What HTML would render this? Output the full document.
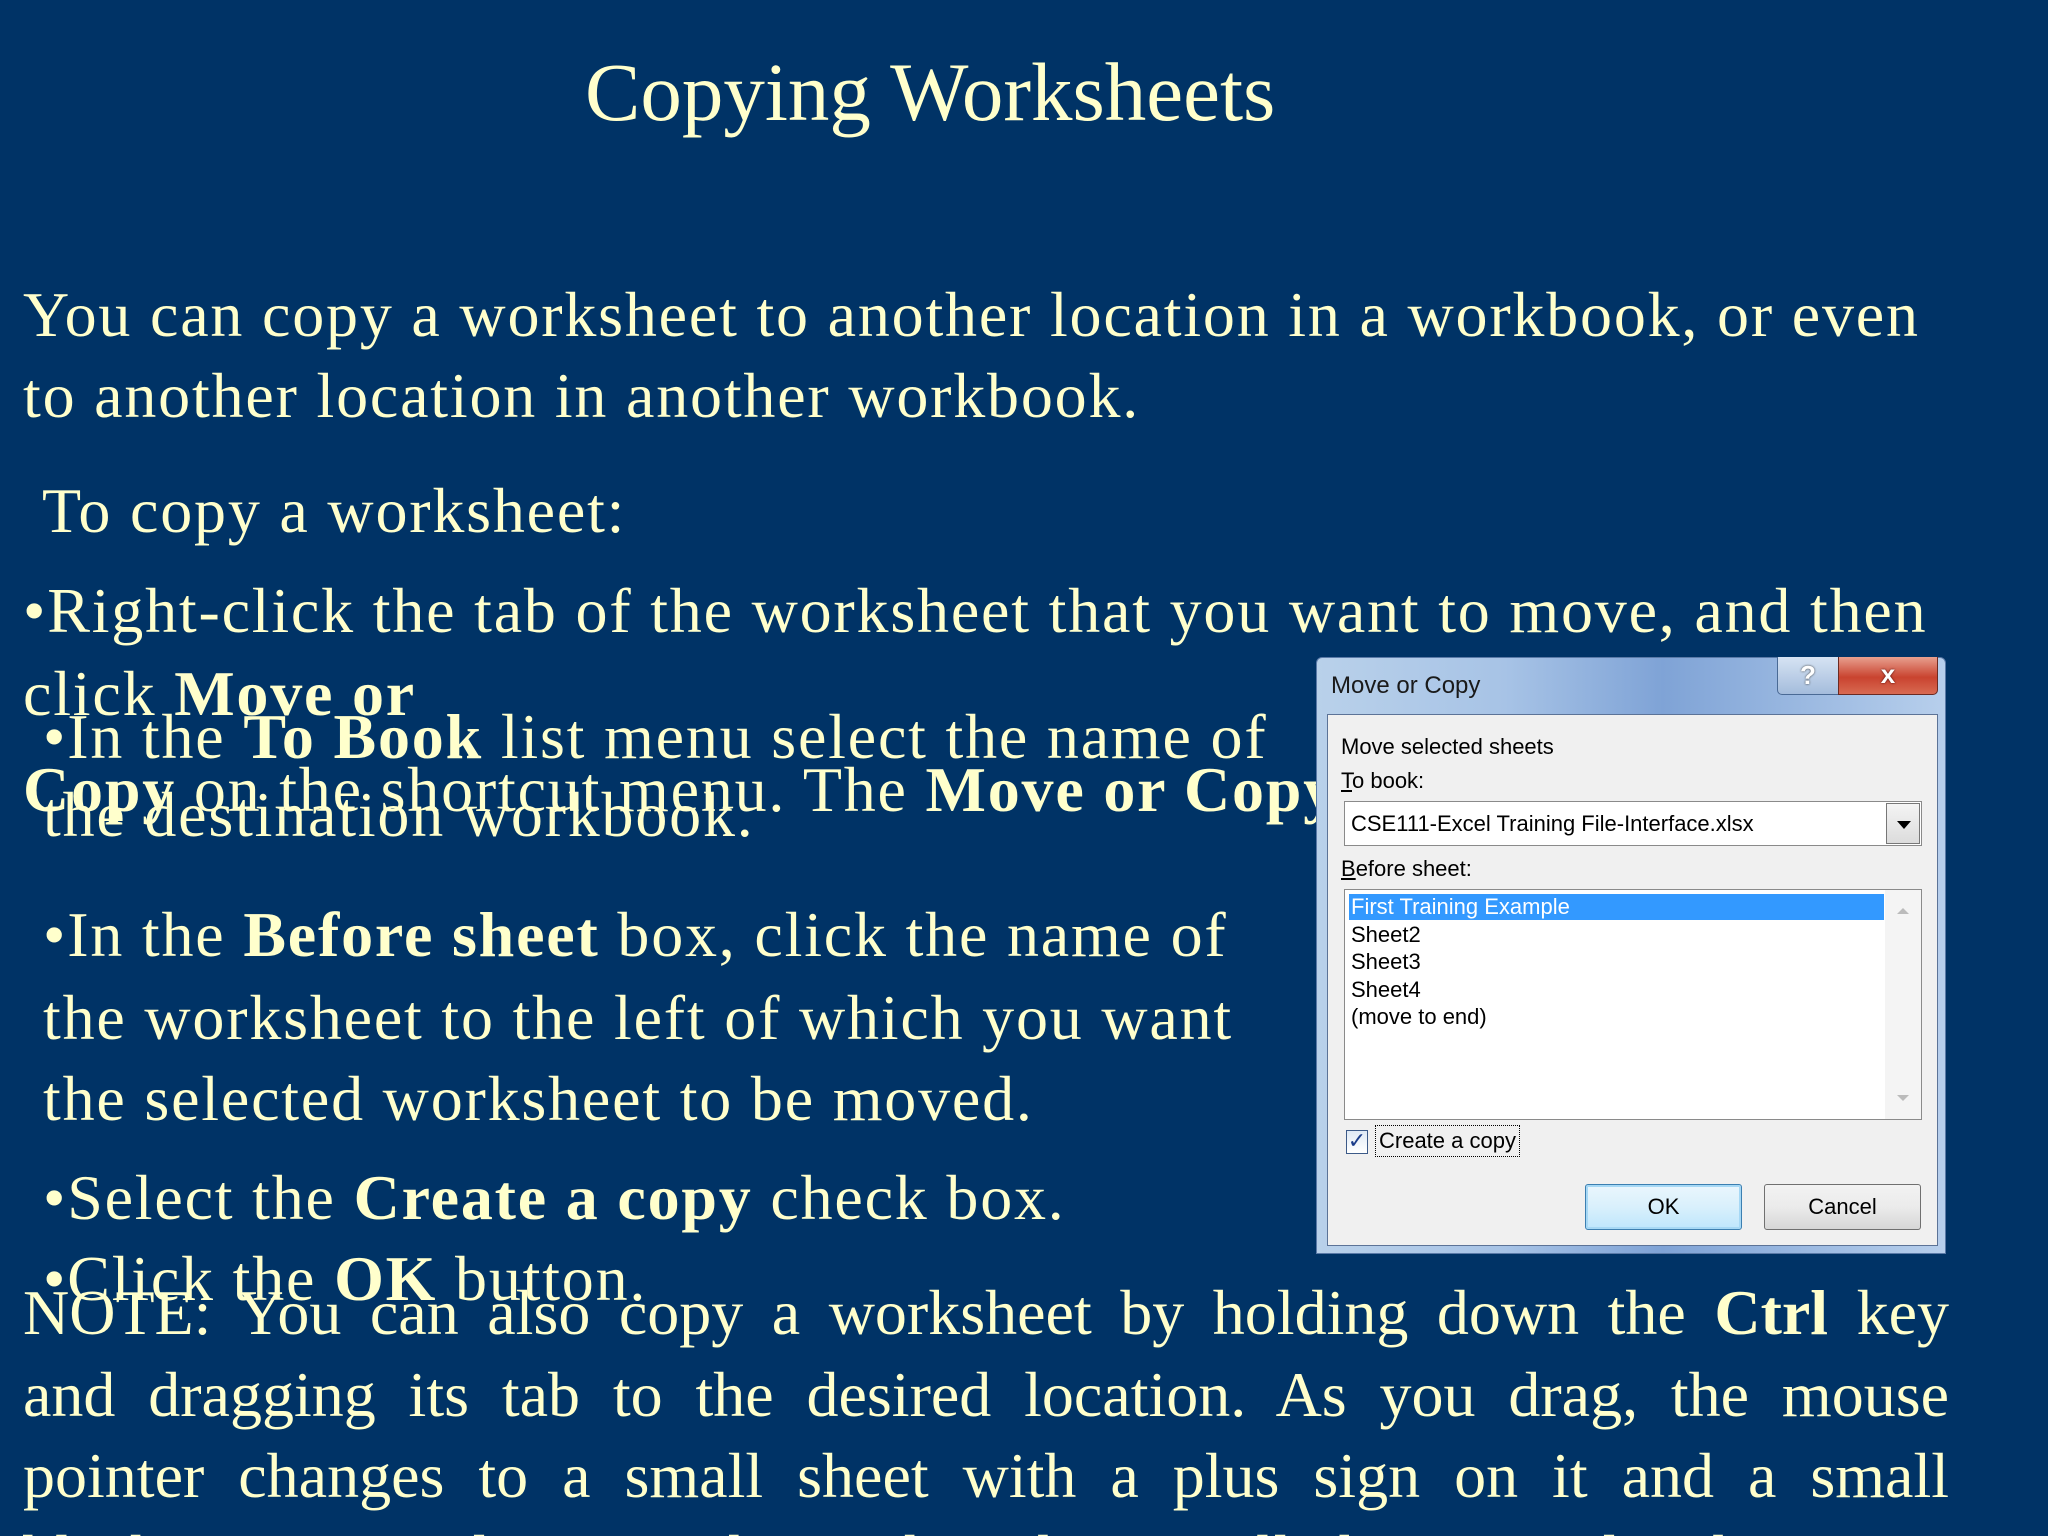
<!DOCTYPE html>
<html><head><meta charset="utf-8">
<style>
*{margin:0;padding:0;box-sizing:border-box}
html,body{width:2048px;height:1536px;overflow:hidden;background:#003366}
body{position:relative;font-family:"Liberation Serif","DejaVu Serif",serif;color:#ffffcc}
.t{position:absolute;white-space:nowrap;font-size:64px;line-height:64px;letter-spacing:1.8px}
b{font-weight:bold}
.j{position:absolute;left:23px;width:1926px;font-size:64px;line-height:64px;text-align:justify;text-align-last:justify;white-space:nowrap}
#dlg{position:absolute;left:1316px;top:657px;width:630px;height:597px;background:linear-gradient(90deg,#b9d1ea 0%,#a7c3e6 30%,#7fa3d6 55%,#b7cfec 100%);border:1px solid #5a7aa8;border-radius:6px 6px 0 0;font-family:"Liberation Sans","DejaVu Sans",sans-serif;color:#000}
.d{position:absolute;font-size:22px;line-height:26px;white-space:nowrap}
</style></head><body>
<div class="t" style="left:585px;top:50px;font-size:83px;line-height:84px;letter-spacing:0">Copying Worksheets</div>
<div class="t" style="left:23px;top:283px">You can copy a worksheet to another location in a workbook, or even</div>
<div class="t" style="left:23px;top:364px">to another location in another workbook.</div>
<div class="t" style="left:42px;top:479px">To copy a worksheet:</div>
<div class="t" style="left:23px;top:579px">•Right-click the tab of the worksheet that you want to move, and then</div>
<div class="t" style="left:23px;top:662px">click <b>Move or</b></div>
<div class="t" style="left:23px;top:758px"><b>Copy</b> on the shortcut menu. The <b>Move or Copy</b> dialog box appears.</div>
<div class="t" style="left:43px;top:705px">•In the <b>To Book</b> list menu select the name of</div>
<div class="t" style="left:43px;top:783px">the destination workbook.</div>
<div class="t" style="left:43px;top:903px">•In the <b>Before sheet</b> box, click the name of</div>
<div class="t" style="left:43px;top:986px">the worksheet to the left of which you want</div>
<div class="t" style="left:43px;top:1067px">the selected worksheet to be moved.</div>
<div class="t" style="left:43px;top:1166px">•Select the <b>Create a copy</b> check box.</div>
<div class="t" style="left:43px;top:1247px">•Click the <b>OK</b> button.</div>
<div class="j" style="top:1281px">NOTE: You can also copy a worksheet by holding down the <b>Ctrl</b> key</div>
<div class="j" style="top:1363px">and dragging its tab to the desired location. As you drag, the mouse</div>
<div class="j" style="top:1444px">pointer changes to a small sheet with a plus sign on it and a small</div>
<div class="j" style="top:1526px">black arrow indicates where the sheet will be copied when you</div>

<div id="dlg">
  <div class="d" style="left:14px;top:14px;font-size:24px;line-height:28px;color:#1a1a1a">Move or Copy</div>
  <div style="position:absolute;left:460px;top:-1px;width:62px;height:38px;border:1px solid #4a6a95;border-top:none;border-radius:0 0 0 5px;background:linear-gradient(#d6e3f3,#a4bcdc);color:#fff;font:bold 26px/36px 'Liberation Sans',sans-serif;text-align:center;text-shadow:0 0 2px #333">?</div>
  <div style="position:absolute;left:521px;top:-1px;width:100px;height:38px;border:1px solid #6b2a22;border-top:none;border-radius:0 0 5px 0;background:linear-gradient(#e8a08f,#c9432f 55%,#d86a52);color:#fff;font:bold 26px/34px 'Liberation Sans',sans-serif;text-align:center;text-shadow:0 0 2px #400">x</div>
  <div style="position:absolute;left:10px;top:56px;width:611px;height:532px;background:#f0f0f0;border:1px solid #5c7397">
    <div class="d" style="left:13px;top:19px">Move selected sheets</div>
    <div class="d" style="left:13px;top:53px"><u>T</u>o book:</div>
    <div style="position:absolute;left:16px;top:86px;width:578px;height:45px;background:#fff;border:1px solid #8a8a8a">
      <div class="d" style="left:6px;top:9px">CSE111-Excel Training File-Interface.xlsx</div>
      <div style="position:absolute;right:1px;top:1px;width:34px;height:41px;background:linear-gradient(#f4f4f4,#dcdcdc);border:1px solid #777">
        <div style="position:absolute;left:10px;top:17px;width:0;height:0;border-left:7px solid transparent;border-right:7px solid transparent;border-top:8px solid #000"></div>
      </div>
    </div>
    <div class="d" style="left:13px;top:141px"><u>B</u>efore sheet:</div>
    <div style="position:absolute;left:16px;top:174px;width:578px;height:231px;background:#fff;border:1px solid #8a8a8a">
      <div style="position:absolute;left:4px;top:4px;width:535px;height:26px;background:#3399ff"></div>
      <div class="d" style="left:6px;top:4px;color:#fff">First Training Example</div>
      <div class="d" style="left:6px;top:32px">Sheet2</div>
      <div class="d" style="left:6px;top:59px">Sheet3</div>
      <div class="d" style="left:6px;top:87px">Sheet4</div>
      <div class="d" style="left:6px;top:114px">(move to end)</div>
      <div style="position:absolute;right:0;top:0;width:36px;height:229px;background:#f4f4f4"></div>
      <div style="position:absolute;right:12px;top:18px;border-left:6px solid transparent;border-right:6px solid transparent;border-bottom:6px solid #bbb"></div>
      <div style="position:absolute;right:12px;top:205px;border-left:6px solid transparent;border-right:6px solid transparent;border-top:6px solid #bbb"></div>
    </div>
    <div style="position:absolute;left:18px;top:415px;width:22px;height:24px;border:1px solid #3c5a88;background:linear-gradient(#dfe9f5,#fff);color:#1b3d8a;font:bold 22px/22px 'DejaVu Sans',sans-serif;text-align:center">✓</div>
    <div class="d" style="left:47px;top:410px;border:1px dotted #000;padding:2px 3px">Create a copy</div>
    <div style="position:absolute;left:257px;top:469px;width:157px;height:46px;border:1px solid #3c7fb1;border-radius:3px;background:linear-gradient(#eaf6fd,#d9f0fc 50%,#bee6fd);box-shadow:inset 0 0 0 2px #a6d8f5;font:22px/44px 'Liberation Sans',sans-serif;text-align:center">OK</div>
    <div style="position:absolute;left:436px;top:469px;width:157px;height:46px;border:1px solid #707070;border-radius:3px;background:linear-gradient(#f2f2f2,#ebebeb 50%,#d7d7d7);font:22px/44px 'Liberation Sans',sans-serif;text-align:center">Cancel</div>
  </div>
</div>
</body></html>
